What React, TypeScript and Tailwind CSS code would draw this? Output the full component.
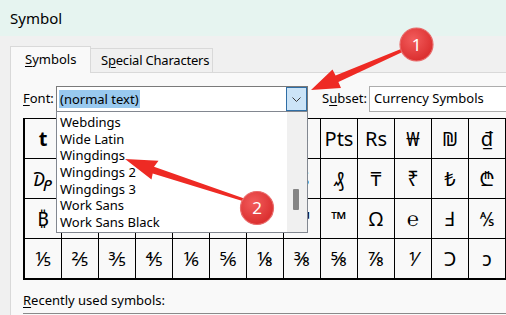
const rows: string[][] = [
  ["t", "₠", "₡", "₢", "₣", "₤", "₥", "₦", "Pts", "Rs", "₩", "₪", "₫", "€"],
  ["₯", "₱", "₲", "₳", "₴", "₵", "₶", "₷", "₰", "₸", "₹", "₺", "₾", "₽"],
  ["₿", "₻", "℗", "℞", "℟", "℣", "℥", "℠", "™", "Ω", "℮", "Ⅎ", "⅍", "ℓ"],
  ["⅕", "⅖", "⅗", "⅘", "⅙", "⅚", "⅛", "⅜", "⅝", "⅞", "⅟", "Ↄ", "ↄ", "ⅰ"],
];

const fonts = [
  "Webdings",
  "Wide Latin",
  "Wingdings",
  "Wingdings 2",
  "Wingdings 3",
  "Work Sans",
  "Work Sans Black",
];

function SymbolGrid() {
  return (
    <div className="mt-[6px] w-max border-b border-l-2 border-t border-black">
      {rows.map((row, r) => (
        <div key={r} className="flex">
          {row.map((ch, c) => (
            <div
              key={c}
              className={`flex h-[40px] w-[37px] shrink-0 items-center justify-center whitespace-nowrap border-b border-r border-black font-['Noto_Sans','DejaVu_Sans',sans-serif] text-[20px] leading-none ${
                r === 0 && c === 0 ? "font-bold" : ""
              }`}
            >
              {ch}
            </div>
          ))}
        </div>
      ))}
    </div>
  );
}

function FontDropdown() {
  return (
    <div className="absolute left-[-1px] top-[24px] z-20 h-[122px] w-[252px] border border-[#828790] bg-white">
      <div className="pl-[3px] pt-[2px]">
        {fonts.map((f) => (
          <div key={f} className="h-[16.67px] leading-[16.67px]">
            {f}
          </div>
        ))}
      </div>
      <div className="absolute bottom-0 right-0 top-0 w-[20px] bg-[#f0f0f0]">
        <div className="absolute left-[6px] top-[77px] h-[21px] w-[6px] rounded-[1px] bg-[#858585]" />
      </div>
    </div>
  );
}

function Annotations() {
  return (
    <svg
      className="pointer-events-none absolute left-0 top-0 z-30"
      width="506"
      height="315"
      viewBox="0 0 506 315"
    >
      <defs>
        <radialGradient id="badge" cx="0.4" cy="0.35" r="0.7">
          <stop offset="0" stopColor="#f25c5c" />
          <stop offset="1" stopColor="#d92b2b" />
        </radialGradient>
      </defs>
      <polygon
        fill="#ee2a24"
        points="311,90 332.5,69.5 335.6,75.6 403.4,48.1 404.6,50.9 338.4,82 341,88"
      />
      <polygon
        fill="#ee2a24"
        points="125,159 158.5,160.7 154,166.8 243.5,198.2 242.5,201 152.7,173.4 151.5,179.5"
      />
      <circle cx="416.5" cy="44.5" r="16.5" fill="url(#badge)" stroke="#e96a6a" strokeWidth="1.2" />
      <text x="416.5" y="50.5" textAnchor="middle" fill="#fff" fontSize="17" fontFamily="Noto Sans, sans-serif">
        1
      </text>
      <circle cx="257" cy="208" r="16.5" fill="url(#badge)" stroke="#e96a6a" strokeWidth="1.2" />
      <text x="257" y="214" textAnchor="middle" fill="#fff" fontSize="17" fontFamily="Noto Sans, sans-serif">
        2
      </text>
    </svg>
  );
}

export default function App() {
  return (
    <div className="relative h-[315px] w-[506px] overflow-hidden bg-[#f0f0f0] font-['Segoe_UI','Noto_Sans',sans-serif] text-[13px] text-black">
      <div className="flex h-[36px] items-center bg-[#e6f4f0] pl-[10px] text-[15px]">Symbol</div>

      <div className="pl-[10px] pt-[10px]">
        <div className="flex items-end">
          <div className="relative z-10 -mb-px flex h-[27px] w-[81px] items-center border border-b-0 border-[#d9d9d9] bg-[#f9f9f9] pl-[14px]">
            <span>
              <span className="underline underline-offset-2">S</span>ymbols
            </span>
          </div>
          <div className="flex h-[24px] items-center border border-b-0 border-l-0 border-[#d9d9d9] bg-[#f0f0f0] pl-[10px] pr-[3px] tracking-[-0.2px]">
            <span>
              S<span className="underline underline-offset-2">p</span>ecial Characters
            </span>
          </div>
        </div>

        <div className="h-[300px] border-l border-t border-[#d9d9d9] bg-[#f9f9f9] pl-[12px] pt-[13px]">
          <div className="flex h-[26px] items-center">
            <div className="w-[33px] shrink-0">
              <span className="underline underline-offset-2">F</span>ont:
            </div>
            <div className="relative flex h-[26px] w-[252px] shrink-0 border border-[#7a7a7a] bg-white">
              <div className="flex flex-1 items-center pl-[2px]">
                <span className="bg-[#99c9ef] px-px leading-[18px]">(normal text)</span>
              </div>
              <div className="flex w-[21px] items-center justify-center border border-[#2f6ea5] bg-[#cce4f7]">
                <svg width="9" height="5" viewBox="0 0 9 5">
                  <path d="M0.5 0.5 L4.5 4.5 L8.5 0.5" fill="none" stroke="#3a3a3a" strokeWidth="1" />
                </svg>
              </div>
              <FontDropdown />
            </div>
            <div className="ml-[14px] w-[47px] shrink-0">
              S<span className="underline underline-offset-2">u</span>bset:
            </div>
            <div className="flex h-[26px] w-[200px] shrink-0 items-center border border-[#adadad] bg-white pl-[4px]">
              Currency Symbols
            </div>
          </div>

          <SymbolGrid />

          <div className="mt-[11px] leading-[18px]">
            <span className="underline underline-offset-2">R</span>ecently used symbols:
          </div>
          <div className="mt-[4px] h-[40px] border-t border-[#8a8a8a] bg-[#f9f9f9]" />
        </div>
      </div>

      <Annotations />
    </div>
  );
}
